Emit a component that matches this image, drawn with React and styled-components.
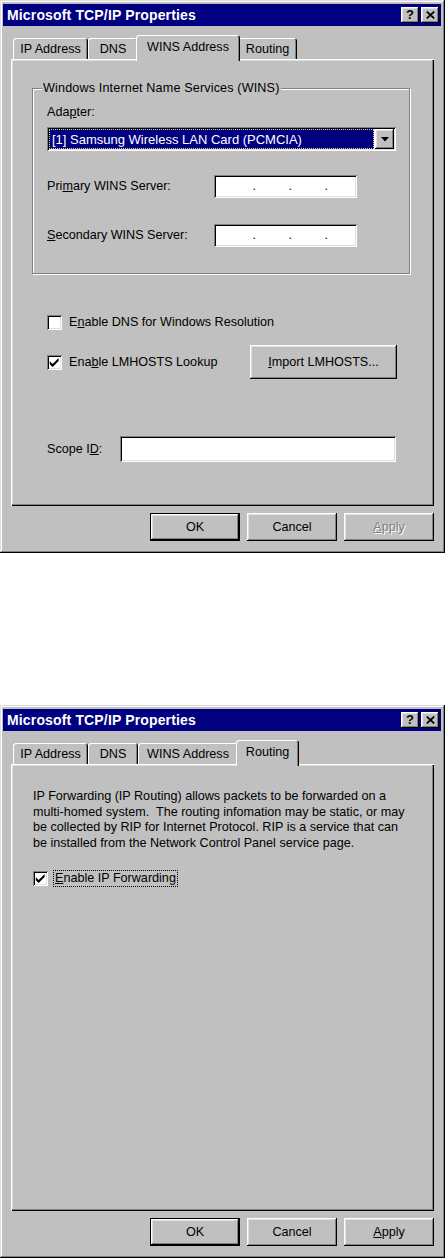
import React from "react";
import styled, { createGlobalStyle, css } from "styled-components";

const GlobalStyle = createGlobalStyle`
  html, body { margin: 0; padding: 0; background: #ffffff; }
  body {
    font-family: "Liberation Sans", Arial, sans-serif;
    font-size: 12.6px;
    color: #000;
  }
  * { box-sizing: border-box; }
`;

const raised = css`
  box-shadow: inset -1px -1px 0 #000, inset 1px 1px 0 #fff,
    inset -2px -2px 0 #808080, inset 2px 2px 0 #dfdfdf;
`;

const sunken = css`
  box-shadow: inset 1px 1px 0 #808080, inset -1px -1px 0 #fff,
    inset 2px 2px 0 #000, inset -2px -2px 0 #dfdfdf;
`;

const Page = styled.div`
  display: flex;
  flex-direction: column;
  gap: 152px;
  width: 446px;
`;

const Window = styled.div`
  width: 445px;
  height: 553px;
  background: #c0c0c0;
  box-shadow: inset -1px -1px 0 #000, inset 1px 1px 0 #dfdfdf,
    inset -2px -2px 0 #808080, inset 2px 2px 0 #fff;
  padding: 4px 4px 3px 3px;
  display: flex;
  flex-direction: column;
`;

const TitleBar = styled.div`
  height: 22px;
  background: #000080;
  display: flex;
  align-items: center;
  padding: 0 2px 0 4px;
  color: #fff;
  font-weight: bold;
  font-size: 14px;
  letter-spacing: 0.15px;
`;

const TitleText = styled.div`
  flex: 1;
  white-space: nowrap;
`;

const CaptionButton = styled.div`
  width: 18px;
  height: 16px;
  background: #c0c0c0;
  ${raised};
  display: flex;
  align-items: center;
  justify-content: center;
  color: #000;
  font-size: 13px;
  font-weight: bold;
  margin-left: ${(p) => p.$gap || 0}px;
  padding-bottom: 1px;
`;

const Body = styled.div`
  flex: 1;
  display: flex;
  flex-direction: column;
  padding: 0 7px 9px 8px;
`;

const TabStrip = styled.div`
  display: flex;
  align-items: flex-end;
  margin-top: 9px;
  padding-left: 2px;
`;

const Tab = styled.div`
  position: relative;
  z-index: ${(p) => (p.$active ? 1 : 0)};
  width: ${(p) => (p.$active ? p.$w + 4 : p.$w)}px;
  height: ${(p) => (p.$active ? 26 : 21)}px;
  margin: 0 ${(p) => (p.$active ? -2 : 0)}px ${(p) => (p.$active ? -2 : 0)}px;
  padding-bottom: ${(p) => (p.$active ? 2 : 0)}px;
  background: #c0c0c0;
  border-radius: 3px 3px 0 0;
  box-shadow: inset 1px 1px 0 #fff, inset -1px 0 0 #000, inset -2px 0 0 #808080;
  display: flex;
  align-items: center;
  justify-content: center;
  white-space: nowrap;
`;

const Panel = styled.div`
  flex: 1;
  background: #c0c0c0;
  box-shadow: inset 1px 1px 0 #fff, inset -1px -1px 0 #000,
    inset -2px -2px 0 #808080, inset 2px 2px 0 #dfdfdf;
  padding: ${(p) => p.$pad};
  display: flex;
  flex-direction: column;
`;

const ButtonRow = styled.div`
  display: flex;
  justify-content: flex-end;
  gap: 7px;
  margin-top: 7px;
`;

const PushButton = styled.div`
  width: ${(p) => p.$w || 90}px;
  height: ${(p) => p.$h || 28}px;
  background: #c0c0c0;
  display: flex;
  align-items: center;
  justify-content: center;
  white-space: nowrap;
  color: ${(p) => (p.$disabled ? "#808080" : "#000")};
  text-shadow: ${(p) => (p.$disabled ? "1px 1px 0 #fff" : "none")};
  box-shadow: ${(p) =>
    p.$default
      ? "inset 0 0 0 1px #000, inset -2px -2px 0 #000, inset 2px 2px 0 #fff, inset -3px -3px 0 #808080, inset 3px 3px 0 #dfdfdf"
      : "inset -1px -1px 0 #000, inset 1px 1px 0 #fff, inset -2px -2px 0 #808080, inset 2px 2px 0 #dfdfdf"};
`;

const Key = styled.span`
  text-decoration: underline;
  text-underline-offset: 1px;
`;

const GroupBox = styled.div`
  position: relative;
  margin-top: 29px;
  border: 1px solid #808080;
  box-shadow: inset 1px 1px 0 #fff, 1px 1px 0 #fff;
  padding: 16px 12px 26px 14px;
`;

const Legend = styled.div`
  position: absolute;
  top: -8px;
  left: 9px;
  line-height: 15px;
  padding: 0 1px;
  background: #c0c0c0;
  white-space: nowrap;
  letter-spacing: 0.15px;
`;

const Label = styled.div`
  line-height: 15px;
  white-space: nowrap;
`;

const Combo = styled.div`
  margin-top: 7px;
  width: 349px;
  height: 24px;
  background: #fff;
  ${sunken};
  padding: 2px;
  display: flex;
`;

const ComboValue = styled.div`
  flex: 1;
  margin-right: 1px;
  background: #000080;
  color: #fff;
  border: 1px dotted #d8d890;
  padding-left: 2px;
  display: flex;
  align-items: center;
  white-space: nowrap;
  font-size: 13px;
`;

const DropButton = styled.div`
  width: 19px;
  background: #c0c0c0;
  ${raised};
  display: flex;
  align-items: center;
  justify-content: center;
`;

const FieldRow = styled.div`
  display: grid;
  grid-template-columns: ${(p) => p.$label}px ${(p) => p.$field};
  align-items: center;
  margin-top: ${(p) => p.$top}px;
`;

const IpField = styled.div`
  width: 143px;
  height: 23px;
  background: #fff;
  ${sunken};
  display: flex;
  align-items: center;
  padding-left: 6px;
`;

const Octet = styled.span`
  width: 36px;
  text-align: right;
  line-height: 15px;
`;

const TextField = styled.div`
  height: 26px;
  background: #fff;
  ${sunken};
`;

const Options = styled.div`
  margin-left: ${(p) => p.$left || 0}px;
  margin-top: ${(p) => p.$top}px;
  display: flex;
  flex-direction: column;
`;

const CheckRow = styled.div`
  display: grid;
  grid-template-columns: ${(p) => p.$cols || "auto"};
  align-items: center;
  margin-top: ${(p) => p.$top || 0}px;
`;

const CheckItem = styled.div`
  display: flex;
  align-items: center;
`;

const Box = styled.div`
  width: 15px;
  height: 15px;
  flex: none;
  background: #fff;
  ${sunken};
  display: flex;
  align-items: center;
  justify-content: center;
`;

const CheckText = styled.span`
  margin-left: 5px;
  padding: 0 1px;
  line-height: 15px;
  border: 1px ${(p) => (p.$focus ? "dotted #000" : "solid transparent")};
  white-space: nowrap;
`;

const Paragraph = styled.p`
  margin: 0;
  line-height: 15.5px;
  white-space: nowrap;
`;

const TABS = [
  { id: "ip", label: "IP Address", width: 75 },
  { id: "dns", label: "DNS", width: 50 },
  { id: "wins", label: "WINS Address", width: 100 },
  { id: "routing", label: "Routing", width: 59 },
];

function CheckMark() {
  return (
    <svg width="11" height="11" viewBox="0 0 11 11">
      <path d="M0.8 4.3 L3.6 7.1 L9.6 1.1 L9.6 4.1 L3.6 10.1 L0.8 7.3 Z" fill="#000" />
    </svg>
  );
}

function Checkbox({ checked, children, focus }) {
  return (
    <CheckItem>
      <Box>{checked && <CheckMark />}</Box>
      <CheckText $focus={focus}>{children}</CheckText>
    </CheckItem>
  );
}

function CloseGlyph() {
  return (
    <svg width="9" height="8" viewBox="0 0 9 8">
      <path d="M0.8 0.6 L8.2 7.4 M8.2 0.6 L0.8 7.4" stroke="#000" strokeWidth="1.8" />
    </svg>
  );
}

function DownArrow() {
  return (
    <svg width="8" height="5" viewBox="0 0 8 5">
      <polygon points="0,0 8,0 4,4.5" fill="#000" />
    </svg>
  );
}

function IpAddress() {
  return (
    <IpField>
      <Octet>.</Octet>
      <Octet>.</Octet>
      <Octet>.</Octet>
    </IpField>
  );
}

function WinsPage() {
  return (
    <Panel $pad="0 24px 0 21px">
      <GroupBox>
        <Legend>Windows Internet Name Services (WINS)</Legend>
        <Label>
          Ada<Key>p</Key>ter:
        </Label>
        <Combo>
          <ComboValue>[1] Samsung Wireless LAN Card (PCMCIA)</ComboValue>
          <DropButton>
            <DownArrow />
          </DropButton>
        </Combo>
        <FieldRow $label={167} $field="143px" $top={24}>
          <Label>
            Pri<Key>m</Key>ary WINS Server:
          </Label>
          <IpAddress />
        </FieldRow>
        <FieldRow $label={167} $field="143px" $top={26}>
          <Label>
            <Key>S</Key>econdary WINS Server:
          </Label>
          <IpAddress />
        </FieldRow>
      </GroupBox>
      <Options $left={15} $top={40}>
        <CheckRow>
          <Checkbox>
            E<Key>n</Key>able DNS for Windows Resolution
          </Checkbox>
        </CheckRow>
        <CheckRow $cols="203px 147px" $top={14}>
          <Checkbox checked>
            Ena<Key>b</Key>le LMHOSTS Lookup
          </Checkbox>
          <PushButton $w={147} $h={34}>
            <Key>I</Key>mport LMHOSTS...
          </PushButton>
        </CheckRow>
        <FieldRow $label={73} $field="276px" $top={57}>
          <Label>
            Scope I<Key>D</Key>:
          </Label>
          <TextField />
        </FieldRow>
      </Options>
    </Panel>
  );
}

function RoutingPage() {
  return (
    <Panel $pad="25px 22px 0 22px">
      <Paragraph>
        IP Forwarding (IP Routing) allows packets to be forwarded on a
        <br />
        multi-homed system.&nbsp; The routing infomation may be static, or may
        <br />
        be collected by RIP for Internet Protocol. RIP is a service that can
        <br />
        be installed from the Network Control Panel service page.
      </Paragraph>
      <Options $top={19}>
        <CheckRow>
          <Checkbox checked focus>
            <Key>E</Key>nable IP Forwarding
          </Checkbox>
        </CheckRow>
      </Options>
    </Panel>
  );
}

function TcpIpDialog({ tab }) {
  return (
    <Window>
      <TitleBar>
        <TitleText>Microsoft TCP/IP Properties</TitleText>
        <CaptionButton>?</CaptionButton>
        <CaptionButton $gap={2}>
          <CloseGlyph />
        </CaptionButton>
      </TitleBar>
      <Body>
        <TabStrip>
          {TABS.map((t) => (
            <Tab key={t.id} $w={t.width} $active={t.id === tab}>
              {t.label}
            </Tab>
          ))}
        </TabStrip>
        {tab === "wins" ? <WinsPage /> : <RoutingPage />}
        <ButtonRow>
          <PushButton $default>OK</PushButton>
          <PushButton>Cancel</PushButton>
          <PushButton $disabled={tab === "wins"}>
            <Key>A</Key>pply
          </PushButton>
        </ButtonRow>
      </Body>
    </Window>
  );
}

export default function App() {
  return (
    <>
      <GlobalStyle />
      <Page>
        <TcpIpDialog tab="wins" />
        <TcpIpDialog tab="routing" />
      </Page>
    </>
  );
}
